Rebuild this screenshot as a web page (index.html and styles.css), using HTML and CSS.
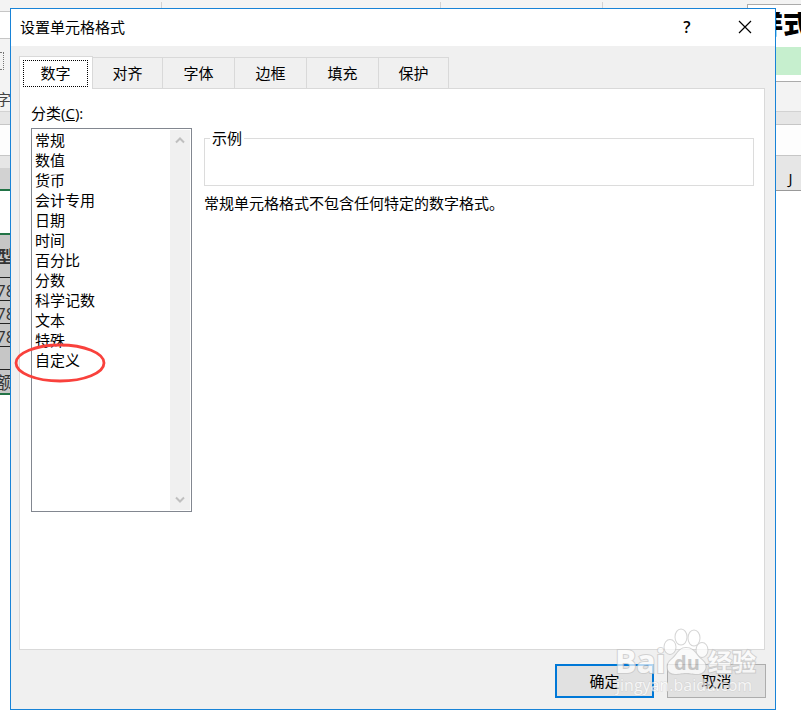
FILE: index.html
```html
<!DOCTYPE html>
<html lang="zh-CN">
<head>
    <meta charset="utf-8">
    <title>设置单元格格式</title>
    <link rel="stylesheet" href="styles.css">
</head>
<body>
<div class="workbook">
    <div class="ribbon-top">
        <span></span><span class="wide"></span><span></span><span class="styles-box"></span>
    </div>
    <div class="edges">
        <div class="edge-left">
            <div class="tab-field"></div>
            <div class="ribbon-group"><span class="ribbon-box"></span><span class="group-name">字</span></div>
            <div class="gap"></div>
            <div class="formula"></div>
            <div class="col-head"></div>
            <div class="row-head"></div>
            <div class="cell-blank"></div>
            <div class="cell cell-title">型</div>
            <div class="cell">78</div>
            <div class="cell">78</div>
            <div class="cell">78</div>
            <div class="cell"></div>
            <div class="cell cell-last">额</div>
        </div>
        <div class="edge-right">
            <div class="style-name">样式</div>
            <div class="style-good"></div>
            <div class="style-end"></div>
            <div class="ribbon-foot"></div>
            <div class="gap"></div>
            <div class="formula"></div>
            <div class="col-name">J</div>
        </div>
    </div>
</div>

<div class="dialog" role="dialog" aria-labelledby="dialog_title">
    <div class="title-bar">
        <span id="dialog_title" class="title">设置单元格格式</span>
        <button class="title-btn" aria-label="帮助">?</button>
        <button class="title-btn close" aria-label="关闭">
            <svg width="14" height="14" viewBox="0 0 14 14"><path d="M1 1L13 13M13 1L1 13" stroke="#000" stroke-width="1.2"/></svg>
        </button>
    </div>
    <div class="dialog-body">
        <div class="tabs" role="tablist">
            <button class="tab active" role="tab" aria-selected="true"><span>数字</span></button>
            <button class="tab narrow" role="tab">对齐</button>
            <button class="tab" role="tab">字体</button>
            <button class="tab" role="tab">边框</button>
            <button class="tab" role="tab">填充</button>
            <button class="tab narrow" role="tab">保护</button>
        </div>
        <div class="panel" role="tabpanel">
            <div class="category">
                <label for="category">分类(<u>C</u>):</label>
                <div class="list-box">
                    <select id="category" size="19">
                        <option>常规</option>
                        <option>数值</option>
                        <option>货币</option>
                        <option>会计专用</option>
                        <option>日期</option>
                        <option>时间</option>
                        <option>百分比</option>
                        <option>分数</option>
                        <option>科学记数</option>
                        <option>文本</option>
                        <option>特殊</option>
                        <option>自定义</option>
                    </select>
                    <div class="scroll-bar">
                        <svg width="10" height="8" viewBox="0 0 10 8"><path d="M1 6.5L5 2.5L9 6.5" fill="none" stroke="#bfbfbf" stroke-width="2"/></svg>
                        <svg width="10" height="8" viewBox="0 0 10 8"><path d="M1 1.5L5 5.5L9 1.5" fill="none" stroke="#bfbfbf" stroke-width="2"/></svg>
                    </div>
                    <svg class="circle-mark" width="92" height="40" viewBox="0 0 92 40"><ellipse cx="46" cy="20" rx="44" ry="18" fill="none" stroke="#f9413c" stroke-width="2.8"/></svg>
                </div>
            </div>
            <div class="detail">
                <fieldset class="sample">
                    <legend>示例</legend>
                </fieldset>
                <p>常规单元格格式不包含任何特定的数字格式。</p>
            </div>
        </div>
        <div class="actions">
            <button class="btn primary">确定</button>
            <button class="btn">取消</button>
        </div>
    </div>
    <svg class="watermark" width="150" height="74" viewBox="0 0 150 74">
        <g class="mark">
            <text x="1" y="45" class="mark-brand">Bai</text>
            <ellipse cx="56" cy="19" rx="5.5" ry="7"/>
            <ellipse cx="67" cy="9" rx="5.5" ry="7.5"/>
            <ellipse cx="80" cy="10" rx="5.5" ry="7.5"/>
            <ellipse cx="88" cy="22" rx="5.5" ry="7"/>
            <path d="M72 20C81 20 82 28 88 32C95 38 91 46 83 46C78 46 76 45 72 45C67 45 66 46 61 46C53 46 51 37 57 32C63 28 64 20 72 20Z"/>
            <text x="94" y="43" class="mark-cn">经验</text>
        </g>
        <text x="60" y="42" class="mark-du">du</text>
        <text x="2" y="63" class="mark-url">jingyan.baidu.com</text>
    </svg>
</div>
</body>
</html>
```

FILE: styles.css
```css
*{
    box-sizing: border-box;
}
body{
    position: relative;
    display: flex;
    margin: 0;
    min-height: 100vh;
    padding: 8px 25px 5px 10px;
    background-color: #fff;
    color: #000;
    font-family: "Open Sans", "Noto Sans CJK SC", sans-serif;
    font-size: 15px;
    line-height: 20px;
}
button, select{
    font: inherit;
    color: inherit;
}
/* workbook behind the dialog */
.workbook{
    position: absolute;
    inset: 0;
    overflow: hidden;
}
.ribbon-top{
    display: flex;
    height: 12px;
    padding-top: 2px;
    background-color: #f3f3f3;
    border-bottom: 1px solid #c6c6c6;
}
.ribbon-top span{
    width: 162px;
    border-right: 1px solid #d2d2d2;
}
.ribbon-top .wide{
    width: 279px;
}
.ribbon-top .styles-box{
    width: 54px;
    margin: 2px 0 -1px auto;
    background-color: #fff;
    border: 1px solid #ababab;
    border-width: 1px 0 0 1px;
}
.edges{
    display: flex;
    justify-content: space-between;
}
.edge-left{
    width: 10px;
    overflow: hidden;
}
.edge-right{
    width: 26px;
    overflow: hidden;
    white-space: nowrap;
}
.tab-field{
    height: 27px;
    border-bottom: 1px solid #c6c6c6;
}
.ribbon-group{
    display: flex;
    flex-direction: column;
    justify-content: space-between;
    height: 73px;
    padding: 13px 0 2px;
    background-color: #f3f3f3;
    border-bottom: 1px solid #d2d2d2;
}
.ribbon-box{
    width: 4px;
    height: 18px;
    border: 1px dotted #777;
    border-left: none;
}
.group-name{
    margin-left: -4px;
    color: #444;
}
.gap{
    height: 13px;
    background-color: #e6e6e6;
    border-bottom: 1px solid #c6c6c6;
}
.formula{
    height: 31px;
    background-color: #fdfdfd;
    border-bottom: 1px solid #c6c6c6;
}
.col-head{
    height: 12px;
    background-color: #e6e6e6;
}
.row-head{
    height: 23px;
    background-color: #d2d2d2;
    border-bottom: 2px solid #217346;
}
.cell-blank{
    height: 44px;
    border-bottom: 2px solid #217346;
}
.cell{
    height: 23px;
    background-color: #c6c6c6;
    border-bottom: 1px solid #222;
    color: #333;
    font-size: 17px;
    text-indent: -4px;
    line-height: 25px;
}
.cell-title{
    height: 43px;
    font-weight: bold;
    line-height: 44px;
}
.cell-last{
    height: 25px;
    border-bottom: 2px solid #217346;
}
.style-name{
    height: 35px;
    font-size: 28px;
    font-weight: 900;
    line-height: 22px;
    text-indent: -20px;
}
.style-good{
    height: 28px;
    background-color: #c6efce;
}
.style-end{
    height: 7px;
    border-bottom: 1px solid #ababab;
}
.ribbon-foot{
    height: 30px;
    background-color: #f3f3f3;
    border-bottom: 1px solid #d2d2d2;
}
.col-name{
    height: 35px;
    padding: 12px 0 0 5px;
    background-color: #e6e6e6;
    border-bottom: 1px solid #999;
    text-align: center;
}
/* dialog */
.dialog{
    position: relative;
    flex: 1;
    display: flex;
    flex-direction: column;
    background-color: #f0f0f0;
    border: 1px solid #1883d7;
}
.title-bar{
    display: flex;
    align-items: center;
    height: 37px;
    padding: 0 0 2px 9px;
    background-color: #fff;
}
.title{
    flex: 1;
}
.title-btn{
    display: flex;
    align-items: center;
    justify-content: center;
    width: 56px;
    height: 35px;
    padding: 0;
    background: none;
    border: none;
    font-size: 16px;
    font-weight: 600;
}
.close{
    width: 60px;
}
.dialog-body{
    flex: 1;
    display: flex;
    flex-direction: column;
    padding: 10px 9px 11px 8px;
}
.tabs{
    display: flex;
    align-items: flex-end;
}
.tab{
    width: 72px;
    height: 31px;
    padding: 0;
    background-color: #f0f0f0;
    border: 1px solid #d9d9d9;
    border-left: none;
    border-bottom: none;
}
.tab.narrow{
    width: 70px;
}
.tab.active{
    z-index: 1;
    width: 74px;
    height: 33px;
    margin-bottom: -1px;
    padding: 3px 4px 3px 3px;
    background-color: #fff;
    border-left: 1px solid #d9d9d9;
}
.tab.active span{
    display: block;
    height: 27px;
    border: 1px dotted #000;
    line-height: 25px;
}
.panel{
    flex: 1;
    display: flex;
    gap: 12px;
    margin-right: 1px;
    padding: 14px 10px 20px 11px;
    background-color: #fff;
    border: 1px solid #d9d9d9;
}
.category{
    width: 161px;
}
.category label{
    display: block;
    height: 25px;
}
.list-box{
    position: relative;
    display: flex;
    border: 1px solid #828790;
}
.list-box select{
    flex: 1;
    height: 382px;
    padding: 0;
    background-color: #fff;
    border: none;
    outline: none;
    overflow: hidden;
}
.list-box option{
    height: 20px;
    padding: 0 3px;
    line-height: 20px;
}
.scroll-bar{
    display: flex;
    flex-direction: column;
    justify-content: space-between;
    align-items: center;
    width: 20px;
    margin: 1px;
    padding: 6px 0;
    background-color: #f0f0f0;
}
.circle-mark{
    position: absolute;
    left: -18px;
    top: 214px;
}
.detail{
    flex: 1;
    padding-top: 25px;
}
.sample{
    height: 58px;
    margin: 0;
    padding: 0 5px;
    border: 1px solid #dcdcdc;
}
.sample legend{
    padding: 0 2px;
}
.detail p{
    margin: 7px 0;
}
.actions{
    display: flex;
    justify-content: flex-end;
    gap: 13px;
    padding-top: 14px;
}
.btn{
    width: 99px;
    height: 34px;
    padding: 0;
    background-color: #e1e1e1;
    border: 1px solid #adadad;
}
.btn.primary{
    border: 2px solid #0078d7;
}
.watermark{
    position: absolute;
    right: 11px;
    bottom: 7px;
    opacity: 0.7;
    pointer-events: none;
}
.mark{
    fill: #fff;
    stroke: #c4c4c4;
    stroke-width: 2px;
    paint-order: stroke;
}
.mark-brand{
    font: bold 32px "Open Sans", sans-serif;
}
.mark-du{
    fill: #b8b8b8;
    font: bold 20px "Open Sans", sans-serif;
}
.mark-cn{
    font: bold 24px "Noto Sans CJK SC", sans-serif;
}
.mark-url{
    fill: #fff;
    stroke: #d0d0d0;
    stroke-width: 1px;
    paint-order: stroke;
    font: 16px "Open Sans", sans-serif;
}
```
